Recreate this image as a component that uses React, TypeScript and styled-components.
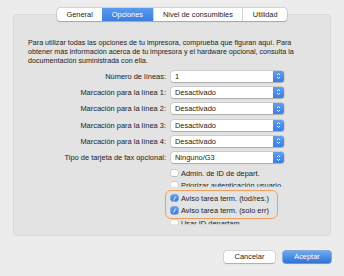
import React from "react";
import styled, { createGlobalStyle } from "styled-components";

const GlobalStyle = createGlobalStyle`
  html, body {
    margin: 0;
    padding: 0;
    background: #ececec;
  }
  body {
    font-family: "Liberation Sans", Arial, sans-serif;
    -webkit-font-smoothing: antialiased;
  }
`;

const Window = styled.div`
  width: 344px;
  height: 276px;
  box-sizing: border-box;
  padding: 8px 13px 0 13px;
  display: flex;
  flex-direction: column;
  background: #ececec;
  overflow: hidden;
`;

const TabBar = styled.div`
  position: relative;
  z-index: 1;
  align-self: center;
  display: flex;
  height: 12.5px;
  margin-bottom: -6.5px;
  background: #fff;
  border-radius: 3px;
  box-shadow: 0 0 0 0.5px rgba(0, 0, 0, 0.18), 0 0.5px 1px rgba(0, 0, 0, 0.2);
`;

const Tab = styled.div<{ $active?: boolean }>`
  display: flex;
  align-items: center;
  padding: 0 9.5px;
  font-size: 7.4px;
  color: ${(p) => (p.$active ? "#fff" : "#222")};
  background: ${(p) => (p.$active ? "linear-gradient(#5b9bef, #3a7fe0)" : "transparent")};
  border-left: ${(p) => (p.$active ? "none" : "0.5px solid #d4d4d4")};
  &:first-child {
    border-left: none;
    border-radius: 3px 0 0 3px;
  }
  &:last-child {
    border-radius: 0 3px 3px 0;
  }
`;

const Panel = styled.div`
  height: 222px;
  box-sizing: border-box;
  background: #e3e3e3;
  border: 0.5px solid #d9d9d9;
  border-radius: 4px;
  padding: 24px 14px 0 14px;
  display: flex;
  flex-direction: column;
  overflow: hidden;
`;

const Intro = styled.p`
  margin: 0 0 2px 0;
  font-size: 7.17px;
  line-height: 9px;
  color: #222;
  white-space: nowrap;
`;

const FormGrid = styled.div`
  display: grid;
  grid-template-columns: 138px 113px;
  column-gap: 5px;
`;

const Label = styled.div`
  height: 16.33px;
  display: flex;
  align-items: center;
  justify-content: flex-end;
  font-size: 7.45px;
  color: #222;
  white-space: nowrap;
`;

const PopupCell = styled.div`
  height: 16.33px;
  display: flex;
  align-items: center;
`;

const Popup = styled.div`
  flex: 1;
  height: 11px;
  display: flex;
  background: #fff;
  border-radius: 2.5px;
  box-shadow: 0 0 0 0.5px rgba(0, 0, 0, 0.16), 0 0.5px 1px rgba(0, 0, 0, 0.18);
  overflow: hidden;
`;

const PopupText = styled.div`
  flex: 1;
  display: flex;
  align-items: center;
  padding-left: 4px;
  font-size: 7.45px;
  color: #222;
`;

const Stepper = styled.div`
  width: 11px;
  display: flex;
  align-items: center;
  justify-content: center;
  background: linear-gradient(#5e9ff0, #3a7ee0);
`;

const CheckList = styled.div`
  margin-left: 133px;
  padding: 1px 0 0 10px;
  height: 64px;
  overflow: hidden;
  display: flex;
  flex-direction: column;
`;

const CheckRow = styled.div<{ $cut?: boolean }>`
  height: 12.5px;
  flex-shrink: 0;
  display: flex;
  align-items: center;
  gap: 3.5px;
  font-size: 7.45px;
  color: #222;
  white-space: nowrap;
  clip-path: ${(p) => (p.$cut ? "inset(0 0 42% 0)" : "none")};
`;

const Box = styled.div<{ $checked?: boolean }>`
  width: 6.5px;
  height: 6.5px;
  border-radius: 1.5px;
  display: flex;
  align-items: center;
  justify-content: center;
  background: ${(p) => (p.$checked ? "linear-gradient(#5e9ff0, #3a7ee0)" : "#fff")};
  box-shadow: ${(p) =>
    p.$checked ? "0 0 0 0.5px #3573d0" : "0 0 0 0.5px rgba(0,0,0,0.2), 0 0.5px 0.5px rgba(0,0,0,0.15)"};
`;

const Highlight = styled.div`
  position: relative;
  width: 100px;
  &::after {
    content: "";
    position: absolute;
    top: -1.5px;
    bottom: -2.5px;
    left: -6.5px;
    right: -6.5px;
    border: 1.2px solid #f0a05a;
    border-radius: 6px;
    pointer-events: none;
  }
`;

const Footer = styled.div`
  display: flex;
  justify-content: flex-end;
  gap: 8px;
  margin-top: 14.5px;
`;

const Button = styled.div<{ $primary?: boolean }>`
  width: ${(p) => (p.$primary ? "48px" : "51px")};
  height: 12.5px;
  display: flex;
  align-items: center;
  justify-content: center;
  font-size: 7.45px;
  border-radius: 2.5px;
  color: ${(p) => (p.$primary ? "#fff" : "#222")};
  background: ${(p) => (p.$primary ? "linear-gradient(#6aa9f2, #2f72d5)" : "#fff")};
  box-shadow: ${(p) =>
    p.$primary
      ? "0 0 0 0.5px #2c6bc9, 0 0.5px 1px rgba(0,0,0,0.2)"
      : "0 0 0 0.5px rgba(0,0,0,0.16), 0 0.5px 1px rgba(0,0,0,0.2)"};
`;

const Arrows = () => (
  <svg width="5" height="8" viewBox="0 0 5 8">
    <path d="M1 3 L2.5 1.5 L4 3 M1 5 L2.5 6.5 L4 5" fill="none" stroke="#fff" strokeWidth="0.9" />
  </svg>
);

const Check = () => (
  <svg width="5" height="5" viewBox="0 0 5 5">
    <path d="M3.6 0.9 L1.6 4.2" fill="none" stroke="#fff" strokeWidth="0.9" strokeLinecap="round" />
  </svg>
);

const rows = [
  { label: "Número de líneas:", value: "1" },
  { label: "Marcación para la línea 1:", value: "Desactivado" },
  { label: "Marcación para la línea 2:", value: "Desactivado" },
  { label: "Marcación para la línea 3:", value: "Desactivado" },
  { label: "Marcación para la línea 4:", value: "Desactivado" },
  { label: "Tipo de tarjeta de fax opcional:", value: "Ninguno/G3" },
];

const tabs = ["General", "Opciones", "Nivel de consumibles", "Utilidad"];

export default function App() {
  return (
    <>
      <GlobalStyle />
      <Window>
        <TabBar>
          {tabs.map((t) => (
            <Tab key={t} $active={t === "Opciones"}>
              {t}
            </Tab>
          ))}
        </TabBar>
        <Panel>
          <Intro>
            Para utilizar todas las opciones de tu impresora, comprueba que figuran aquí. Para
            <br />
            obtener más información acerca de tu impresora y el hardware opcional, consulta la
            <br />
            documentación suministrada con ella.
          </Intro>
          <FormGrid>
            {rows.map((r) => (
              <React.Fragment key={r.label}>
                <Label>{r.label}</Label>
                <PopupCell>
                  <Popup>
                    <PopupText>{r.value}</PopupText>
                    <Stepper>
                      <Arrows />
                    </Stepper>
                  </Popup>
                </PopupCell>
              </React.Fragment>
            ))}
          </FormGrid>
          <CheckList>
            <CheckRow>
              <Box />
              Admin. de ID de depart.
            </CheckRow>
            <CheckRow $cut>
              <Box />
              Priorizar autenticación usuario
            </CheckRow>
            <Highlight>
              <CheckRow>
                <Box $checked>
                  <Check />
                </Box>
                Aviso tarea term. (tod/res.)
              </CheckRow>
              <CheckRow>
                <Box $checked>
                  <Check />
                </Box>
                Aviso tarea term. (solo err)
              </CheckRow>
            </Highlight>
            <CheckRow $cut>
              <Box />
              Usar ID departam.
            </CheckRow>
          </CheckList>
        </Panel>
        <Footer>
          <Button>Cancelar</Button>
          <Button $primary>Aceptar</Button>
        </Footer>
      </Window>
    </>
  );
}
